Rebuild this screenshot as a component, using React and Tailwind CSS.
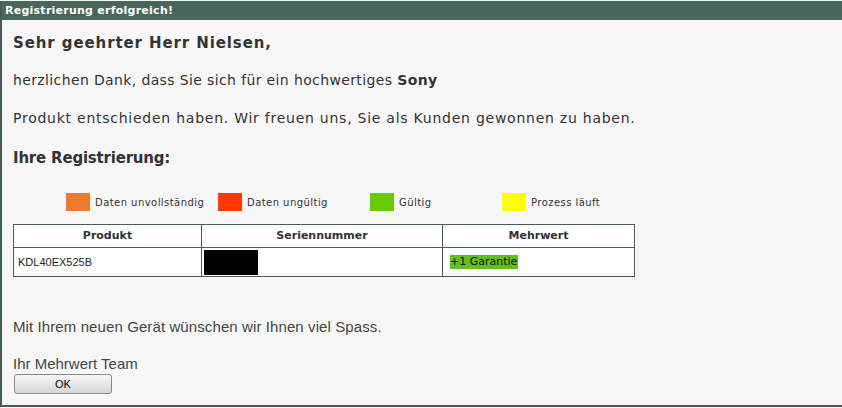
const legend = [
  { label: 'Daten unvollständig', color: 'bg-[#f07a2c]', width: 'w-[152px]' },
  { label: 'Daten ungültig', color: 'bg-[#ff3a00]', width: 'w-[152px]' },
  { label: 'Gültig', color: 'bg-[#66cc00]', width: 'w-[132px]' },
  { label: 'Prozess läuft', color: 'bg-[#ffff00]', width: 'w-[120px]' },
];

export default function App() {
  return (
    <div className="w-[842px] h-[408px] bg-[#f7f7f7] text-[#333] font-['DejaVu_Sans',sans-serif] overflow-hidden">
      <div className="h-[406px] border-l-2 border-b-2 border-[#4b5a55] mt-[1px] flex flex-col">
        <div className="h-[19px] bg-[#4a6659] text-white text-[11px] font-bold leading-[19px] pl-[3px] tracking-[0.25px]">
          Registrierung erfolgreich!
        </div>

        <div className="pl-[11px] flex flex-col">
          <h1 className="mt-[14px] text-[15px] font-bold leading-[18px] tracking-[0.9px]">Sehr geehrter Herr Nielsen,</h1>
          <p className="mt-[19px] text-[14px] leading-[18px] tracking-[0.37px]">
            herzlichen Dank, dass Sie sich für ein hochwertiges <span className="font-bold">Sony</span>
          </p>
          <p className="mt-[20px] text-[14px] leading-[18px] tracking-[0.75px]">
            Produkt entschieden haben. Wir freuen uns, Sie als Kunden gewonnen zu haben.
          </p>
          <h2 className="mt-[22px] text-[15px] font-bold leading-[18px] tracking-[-0.2px]">Ihre Registrierung:</h2>

          <div className="mt-[26px] flex items-center pl-[53px] text-[10px] h-[18px] tracking-[0.45px]">
            {legend.map((item) => (
              <div key={item.label} className={`flex items-center gap-[5px] ${item.width}`}>
                <span className={`w-[24px] h-[18px] shrink-0 ${item.color}`}></span>
                <span>{item.label}</span>
              </div>
            ))}
          </div>

          <table className="mt-[13px] w-[622px] border-collapse bg-white text-[11px]">
            <thead>
              <tr className="h-[23px]">
                <th className="w-[188px] border border-[#4b5a55] font-bold">Produkt</th>
                <th className="w-[241px] border border-[#4b5a55] font-bold">Seriennummer</th>
                <th className="border border-[#4b5a55] font-bold">Mehrwert</th>
              </tr>
            </thead>
            <tbody>
              <tr className="h-[29px]">
                <td className="border border-[#4b5a55] pl-[4px] font-['Liberation_Sans',sans-serif] text-[11px] text-[#222]">KDL40EX525B</td>
                <td className="border border-[#4b5a55] pl-[2px]">
                  <div className="w-[54px] h-[25px] bg-black"></div>
                </td>
                <td className="border border-[#4b5a55] pl-[7px]">
                  <span className="inline-block bg-[#5fc11a] text-[#111] leading-[14px] pr-[1px]">+1 Garantie</span>
                </td>
              </tr>
            </tbody>
          </table>

          <p className="mt-[41px] font-['Liberation_Sans',sans-serif] text-[15px] leading-[18px] text-[#444] tracking-[0.1px]">
            Mit Ihrem neuen Gerät wünschen wir Ihnen viel Spass.
          </p>
          <p className="mt-[19px] font-['Liberation_Sans',sans-serif] text-[15px] leading-[18px] text-[#444]">
            Ihr Mehrwert Team
          </p>
          <button className="mt-[1px] ml-[1px] w-[98px] h-[20px] rounded-[3px] border border-[#8a8a8a] bg-gradient-to-b from-[#f8f8f8] to-[#d6d6d6] font-['Liberation_Sans',sans-serif] text-[11px] text-black">
            OK
          </button>
        </div>
      </div>
    </div>
  );
}
